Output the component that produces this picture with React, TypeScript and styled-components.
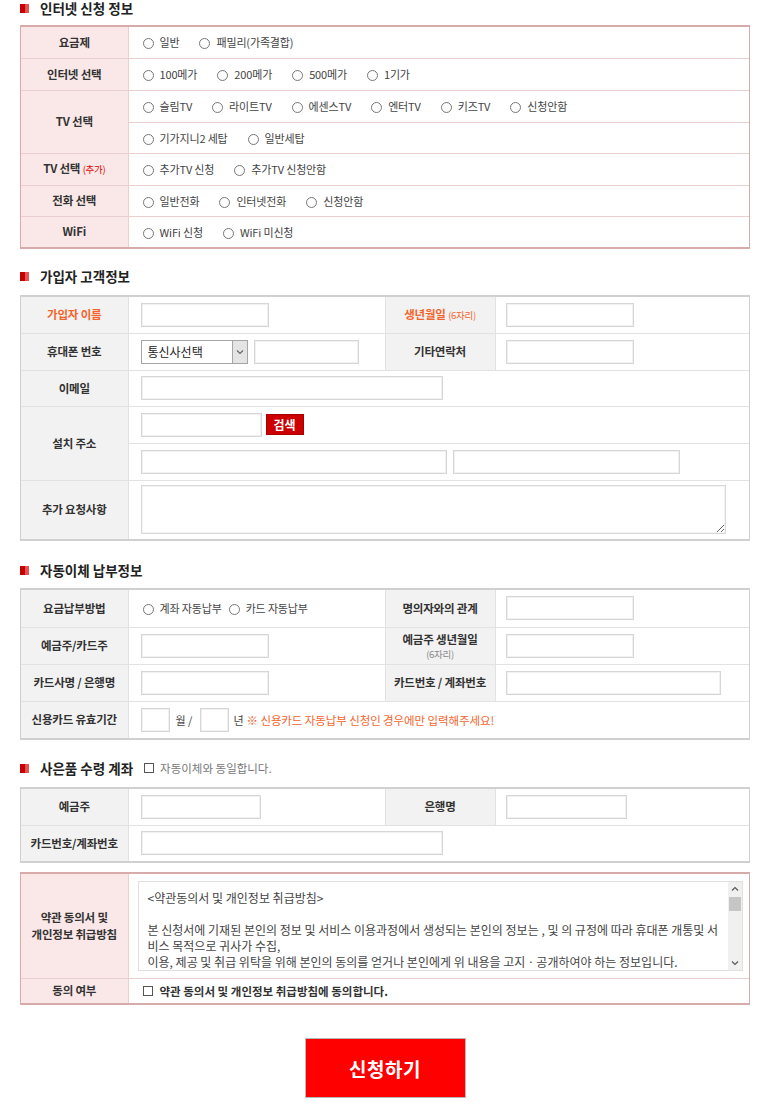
import React from "react";
import styled, { createGlobalStyle } from "styled-components";

type Tone = "pink" | "gray";

const tones = {
  pink: { outer: "#d8abab", inner: "#ebcfcf", label: "#fae8e8" },
  gray: { outer: "#d0d0d0", inner: "#e2e2e2", label: "#f2f2f2" },
};

const GlobalStyle = createGlobalStyle`
  html, body {
    margin: 0;
    padding: 0;
    background: #fff;
  }
  body {
    font-family: "Noto Sans CJK KR", "Noto Sans", sans-serif;
    color: #333;
  }
  * {
    box-sizing: border-box;
  }
`;

const Page = styled.div`
  width: 760px;
  padding: 0 10px 12px 20px;
`;

// 섹션 제목 (빨간 네모 + 굵은 글씨)
const SectionTitle = styled.div<{ $top?: number; $bottom?: number }>`
  display: flex;
  align-items: center;
  height: 16px;
  margin: ${(p) => p.$top ?? 0}px 0 ${(p) => p.$bottom ?? 10}px;
  font-size: 13.5px;
  line-height: 16px;
  font-weight: 700;
  color: #222;
  &::before {
    content: "";
    width: 9px;
    height: 9px;
    margin-right: 11px;
    background: linear-gradient(to right, #c40000 55%, #e85252 55%);
  }
`;

const TitleNote = styled.label`
  display: inline-flex;
  align-items: center;
  margin-left: 11px;
  font-size: 11.5px;
  font-weight: 400;
  color: #777;
`;

const Frame = styled.div<{ $tone: Tone; $top?: number }>`
  margin-top: ${(p) => p.$top ?? 0}px;
  border-top: 2px solid ${(p) => tones[p.$tone].outer};
  border-bottom: 2px solid ${(p) => tones[p.$tone].outer};
  border-left: 1px solid ${(p) => tones[p.$tone].outer};
  border-right: 1px solid ${(p) => tones[p.$tone].outer};
`;

const Table = styled.table<{ $tone: Tone }>`
  width: 100%;
  border-collapse: collapse;
  border-style: hidden;
  table-layout: fixed;
  th,
  td {
    border: 1px solid ${(p) => tones[p.$tone].inner};
  }
  th {
    background: ${(p) => tones[p.$tone].label};
  }
`;

const Col = styled.col<{ $w?: number }>`
  width: ${(p) => (p.$w ? `${p.$w}px` : "auto")};
`;

const Row = styled.tr<{ $h: number }>`
  height: ${(p) => p.$h}px;
`;

const Th = styled.th<{ $accent?: boolean }>`
  padding: 0 4px;
  text-align: center;
  vertical-align: middle;
  font-size: 11.5px;
  line-height: 17px;
  font-weight: 700;
  letter-spacing: -0.2px;
  color: ${(p) => (p.$accent ? "#f2662e" : "#333")};
`;

const Td = styled.td<{ $pad?: string }>`
  padding: ${(p) => p.$pad ?? "0 12px"};
  vertical-align: middle;
  font-size: 11px;
  color: #444;
`;

const Small = styled.span<{ $color: string }>`
  font-size: 9.5px;
  font-weight: 400;
  letter-spacing: -0.3px;
  color: ${(p) => p.$color};
`;

const SubLine = styled.span`
  display: block;
  font-size: 9.5px;
  line-height: 13px;
  font-weight: 400;
  letter-spacing: -0.3px;
  color: #888;
`;

const CellFlex = styled.div<{ $gap?: number }>`
  display: flex;
  align-items: center;
  gap: ${(p) => p.$gap ?? 0}px;
`;

const OptionList = styled.div<{ $gap: number }>`
  display: flex;
  align-items: center;
  padding-left: 2px;
  gap: ${(p) => p.$gap}px;
`;

const Option = styled.label`
  display: inline-flex;
  align-items: center;
  font-size: 11px;
  letter-spacing: -0.15px;
  color: #444;
  white-space: nowrap;
`;

const Radio = styled.span`
  display: inline-block;
  width: 11px;
  height: 11px;
  margin: 3px 6px 0 0;
  border: 1px solid #777;
  border-radius: 50%;
  background: #fff;
`;

const Check = styled.span<{ $right?: number }>`
  display: inline-block;
  width: 10px;
  height: 10px;
  margin-right: ${(p) => p.$right ?? 6}px;
  border: 1px solid #555;
  background: #fff;
`;

const TextInput = styled.input<{ $w: number }>`
  width: ${(p) => p.$w}px;
  height: 24px;
  padding: 0 4px;
  border: 1px solid #d6d6d6;
  box-shadow: inset 0 0 0 1px #f1f1f1;
  background: #fff;
  font-family: inherit;
  font-size: 12px;
  outline: none;
`;

const SelectBox = styled.span`
  display: inline-flex;
  width: 107px;
  height: 24px;
  border: 1px solid #a6a6a6;
  background: #fff;
`;

const SelectField = styled.select`
  flex: 1;
  min-width: 0;
  appearance: none;
  border: none;
  background: transparent;
  padding: 0 6px;
  font-family: inherit;
  font-size: 12px;
  color: #222;
  outline: none;
`;

const SelectArrow = styled.span`
  display: flex;
  align-items: center;
  justify-content: center;
  width: 15px;
  border-left: 1px solid #a6a6a6;
  background: #e4e4e4;
`;

const SearchButton = styled.button`
  width: 38px;
  height: 21px;
  margin-left: 4px;
  padding: 0;
  border: 1px solid #a80000;
  background: #cc0000;
  color: #fff;
  font-family: inherit;
  font-size: 12px;
  font-weight: 700;
  line-height: 19px;
`;

const RequestArea = styled.textarea`
  display: block;
  width: 585px;
  height: 49px;
  border: 1px solid #d9d9d9;
  box-shadow: inset 0 0 0 1px #f3f3f3;
  font-family: inherit;
  font-size: 12px;
  outline: none;
`;

// 약관 박스: 글 영역 + 스크롤바
const TermsBox = styled.div`
  display: flex;
  width: 605px;
  height: 90px;
  border: 1px solid #e0e0e0;
  background: #fff;
`;

const TermsText = styled.div`
  flex: 1;
  min-width: 0;
  overflow: hidden;
  padding: 8px 6px 0 9px;
  white-space: pre-wrap;
  font-size: 12px;
  line-height: 16px;
  color: #444;
`;

const ScrollBar = styled.div`
  display: flex;
  flex-direction: column;
  width: 14px;
  background: #f0f0f0;
`;

const ScrollArrow = styled.div`
  display: flex;
  align-items: center;
  justify-content: center;
  height: 14px;
`;

const ScrollTrack = styled.div`
  flex: 1;
  padding: 1px 1px 0;
`;

const ScrollThumb = styled.div`
  height: 14px;
  background: #c6c6c6;
`;

const Unit = styled.span<{ $l: number; $r: number }>`
  margin: 0 ${(p) => p.$r}px 0 ${(p) => p.$l}px;
  font-size: 11px;
  color: #444;
`;

const Notice = styled.span`
  font-size: 11.5px;
  letter-spacing: -0.1px;
  color: #f2662e;
`;

const AgreeText = styled.span`
  font-size: 11.5px;
  font-weight: 700;
  color: #333;
`;

const SubmitButton = styled.button`
  display: block;
  width: 161px;
  height: 60px;
  margin: 33px auto 0;
  border: 1px solid #b8b8b8;
  background: #ff0000;
  color: #fff;
  font-family: inherit;
  font-size: 19px;
  font-weight: 700;
  letter-spacing: 0.5px;
`;

const Options = ({ items, gap = 20 }: { items: string[]; gap?: number }) => (
  <OptionList $gap={gap}>
    {items.map((t) => (
      <Option key={t}>
        <Radio />
        {t}
      </Option>
    ))}
  </OptionList>
);

const Chevron = ({ up = false, color = "#666" }: { up?: boolean; color?: string }) => (
  <svg width="8" height="6" viewBox="0 0 8 6">
    <polyline
      points={up ? "1,4.5 4,1.5 7,4.5" : "1,1.5 4,4.5 7,1.5"}
      fill="none"
      stroke={color}
      strokeWidth="1.1"
    />
  </svg>
);

const termsText = `<약관동의서 및 개인정보 취급방침>

본 신청서에 기재된 본인의 정보 및 서비스 이용과정에서 생성되는 본인의 정보는 , 및 의 규정에 따라 휴대폰 개통및 서비스 목적으로 귀사가 수집,
이용, 제공 및 취급 위탁을 위해 본인의 동의를 얻거나 본인에게 위 내용을 고지ㆍ공개하여야 하는 정보입니다.`;

const InternetSection = () => (
  <>
    <SectionTitle $bottom={9}>인터넷 신청 정보</SectionTitle>
    <Frame $tone="pink">
      <Table $tone="pink">
        <colgroup>
          <Col $w={107} />
          <Col />
        </colgroup>
        <tbody>
          <Row $h={31}>
            <Th>요금제</Th>
            <Td>
              <Options items={["일반", "패밀리(가족결합)"]} />
            </Td>
          </Row>
          <Row $h={32}>
            <Th>인터넷 선택</Th>
            <Td>
              <Options items={["100메가", "200메가", "500메가", "1기가"]} />
            </Td>
          </Row>
          <Row $h={32}>
            <Th rowSpan={2}>TV 선택</Th>
            <Td>
              <Options items={["슬림TV", "라이트TV", "에센스TV", "엔터TV", "키즈TV", "신청안함"]} />
            </Td>
          </Row>
          <Row $h={31}>
            <Td>
              <Options items={["기가지니2 세탑", "일반세탑"]} />
            </Td>
          </Row>
          <Row $h={32}>
            <Th>
              TV 선택 <Small $color="#e60000">(추가)</Small>
            </Th>
            <Td>
              <Options items={["추가TV 신청", "추가TV 신청안함"]} />
            </Td>
          </Row>
          <Row $h={31}>
            <Th>전화 선택</Th>
            <Td>
              <Options items={["일반전화", "인터넷전화", "신청안함"]} />
            </Td>
          </Row>
          <Row $h={31}>
            <Th>WiFi</Th>
            <Td>
              <Options items={["WiFi 신청", "WiFi 미신청"]} />
            </Td>
          </Row>
        </tbody>
      </Table>
    </Frame>
  </>
);

const CustomerSection = () => (
  <>
    <SectionTitle $top={19} $bottom={11}>
      가입자 고객정보
    </SectionTitle>
    <Frame $tone="gray">
      <Table $tone="gray">
        <colgroup>
          <Col $w={107} />
          <Col $w={257} />
          <Col $w={110} />
          <Col />
        </colgroup>
        <tbody>
          <Row $h={36}>
            <Th $accent>가입자 이름</Th>
            <Td>
              <TextInput $w={128} />
            </Td>
            <Th $accent>
              생년월일 <Small $color="#f2662e">(6자리)</Small>
            </Th>
            <Td $pad="0 10px">
              <TextInput $w={128} />
            </Td>
          </Row>
          <Row $h={37}>
            <Th>휴대폰 번호</Th>
            <Td>
              <CellFlex $gap={6}>
                <SelectBox>
                  <SelectField defaultValue="">
                    <option value="">통신사선택</option>
                    <option value="skt">SKT</option>
                    <option value="kt">KT</option>
                    <option value="lgu">LG U+</option>
                  </SelectField>
                  <SelectArrow>
                    <Chevron />
                  </SelectArrow>
                </SelectBox>
                <TextInput $w={105} />
              </CellFlex>
            </Td>
            <Th>기타연락처</Th>
            <Td $pad="0 10px">
              <TextInput $w={128} />
            </Td>
          </Row>
          <Row $h={36}>
            <Th>이메일</Th>
            <Td colSpan={3}>
              <TextInput $w={302} />
            </Td>
          </Row>
          <Row $h={37}>
            <Th rowSpan={2}>설치 주소</Th>
            <Td colSpan={3}>
              <CellFlex>
                <TextInput $w={121} />
                <SearchButton type="button">검색</SearchButton>
              </CellFlex>
            </Td>
          </Row>
          <Row $h={37}>
            <Td colSpan={3}>
              <CellFlex $gap={6}>
                <TextInput $w={306} />
                <TextInput $w={227} />
              </CellFlex>
            </Td>
          </Row>
          <Row $h={59}>
            <Th>추가 요청사항</Th>
            <Td colSpan={3}>
              <RequestArea />
            </Td>
          </Row>
        </tbody>
      </Table>
    </Frame>
  </>
);

const PaymentSection = () => (
  <>
    <SectionTitle $top={21}>자동이체 납부정보</SectionTitle>
    <Frame $tone="gray">
      <Table $tone="gray">
        <colgroup>
          <Col $w={107} />
          <Col $w={257} />
          <Col $w={110} />
          <Col />
        </colgroup>
        <tbody>
          <Row $h={37}>
            <Th>요금납부방법</Th>
            <Td>
              <Options items={["계좌 자동납부", "카드 자동납부"]} gap={7} />
            </Td>
            <Th>명의자와의 관계</Th>
            <Td $pad="0 10px">
              <TextInput $w={128} />
            </Td>
          </Row>
          <Row $h={37}>
            <Th>예금주/카드주</Th>
            <Td>
              <TextInput $w={128} />
            </Td>
            <Th>
              예금주 생년월일
              <SubLine>(6자리)</SubLine>
            </Th>
            <Td $pad="0 10px">
              <TextInput $w={128} />
            </Td>
          </Row>
          <Row $h={37}>
            <Th>카드사명 / 은행명</Th>
            <Td>
              <TextInput $w={128} />
            </Td>
            <Th>카드번호 / 계좌번호</Th>
            <Td $pad="0 10px">
              <TextInput $w={215} />
            </Td>
          </Row>
          <Row $h={37}>
            <Th>신용카드 유효기간</Th>
            <Td colSpan={3}>
              <CellFlex>
                <TextInput $w={29} />
                <Unit $l={6} $r={8}>
                  월 /
                </Unit>
                <TextInput $w={29} />
                <Unit $l={4} $r={3}>
                  년
                </Unit>
                <Notice>※ 신용카드 자동납부 신청인 경우에만 입력해주세요!</Notice>
              </CellFlex>
            </Td>
          </Row>
        </tbody>
      </Table>
    </Frame>
  </>
);

const GiftSection = () => (
  <>
    <SectionTitle $top={20} $bottom={11}>
      사은품 수령 계좌
      <TitleNote>
        <Check $right={6} />
        자동이체와 동일합니다.
      </TitleNote>
    </SectionTitle>
    <Frame $tone="gray">
      <Table $tone="gray">
        <colgroup>
          <Col $w={107} />
          <Col $w={257} />
          <Col $w={110} />
          <Col />
        </colgroup>
        <tbody>
          <Row $h={36}>
            <Th>예금주</Th>
            <Td>
              <TextInput $w={120} />
            </Td>
            <Th>은행명</Th>
            <Td $pad="0 10px">
              <TextInput $w={121} />
            </Td>
          </Row>
          <Row $h={36}>
            <Th>카드번호/계좌번호</Th>
            <Td colSpan={3}>
              <TextInput $w={302} />
            </Td>
          </Row>
        </tbody>
      </Table>
    </Frame>
  </>
);

const TermsSection = () => (
  <Frame $tone="pink" $top={9}>
    <Table $tone="pink">
      <colgroup>
        <Col $w={107} />
        <Col />
      </colgroup>
      <tbody>
        <Row $h={104}>
          <Th>
            약관 동의서 및
            <br />
            개인정보 취급방침
          </Th>
          <Td $pad="0 8px 0 9px">
            <TermsBox>
              <TermsText>{termsText}</TermsText>
              <ScrollBar>
                <ScrollArrow>
                  <Chevron up color="#555" />
                </ScrollArrow>
                <ScrollTrack>
                  <ScrollThumb />
                </ScrollTrack>
                <ScrollArrow>
                  <Chevron color="#555" />
                </ScrollArrow>
              </ScrollBar>
            </TermsBox>
          </Td>
        </Row>
        <Row $h={25}>
          <Th>동의 여부</Th>
          <Td $pad="0 12px 0 14px">
            <CellFlex>
              <Check $right={7} />
              <AgreeText>약관 동의서 및 개인정보 취급방침에 동의합니다.</AgreeText>
            </CellFlex>
          </Td>
        </Row>
      </tbody>
    </Table>
  </Frame>
);

export default function App() {
  return (
    <>
      <GlobalStyle />
      <Page>
        <InternetSection />
        <CustomerSection />
        <PaymentSection />
        <GiftSection />
        <TermsSection />
        <SubmitButton type="button">신청하기</SubmitButton>
      </Page>
    </>
  );
}
